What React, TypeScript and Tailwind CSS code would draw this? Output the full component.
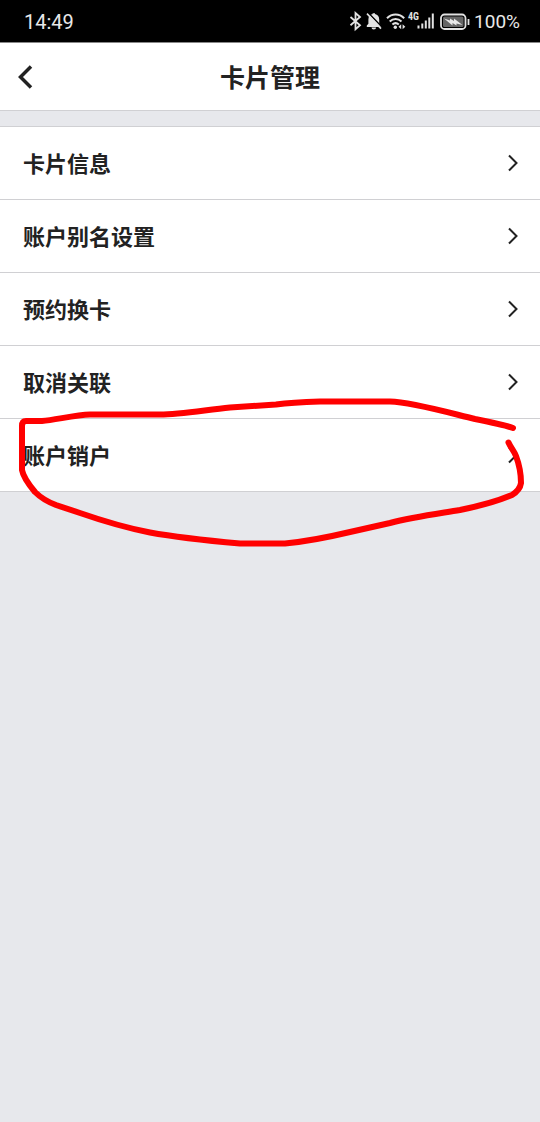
const items = [
  { id: "info", label: "卡片信息" },
  { id: "alias", label: "账户别名设置" },
  { id: "replace", label: "预约换卡" },
  { id: "unlink", label: "取消关联" },
  { id: "close", label: "账户销户", marked: true },
];

function StatusIcons() {
  return (
    <svg className="w-[122px] h-6" viewBox="348 10 122 24" fill="none" stroke="#e2e2e2" aria-hidden="true">
      {/* bluetooth */}
      <path d="M350.5 17l9.5 8.2-4.5 4V13l4.500 4-9.500 8.300" strokeWidth="1.8" />
      {/* muted bell */}
      <path
        d="M366.800 27v-1.500l1.600-1.700v-4.300c0-3 1.700-4.900 4.200-5.400v-.9h2.400v.9c2.500.5 4.200 2.400 4.200 5.400v4.300l1.600 1.700v1.500zM371.500 27.600h4.600a2.300 1.900 0 0 1-4.600 0z"
        fill="#e2e2e2"
        stroke="none"
      />
      <path d="M368.200 12.800l14 14.500" stroke="#000" strokeWidth="1.5" />
      <path d="M367 13.600l14 15" strokeWidth="1.6" />
      {/* wifi */}
      <path d="M387 18.200c4.900-5 12.300-5 17.200 0M389.700 21.400c3.500-3.300 8.300-3.300 11.800 0M392.400 24.500c2-1.700 4.400-1.700 6.400 0" strokeWidth="2" />
      <circle cx="395.3" cy="27.3" r="1.7" fill="#e2e2e2" stroke="none" />
      <path d="M401.200 24.200v5l-2.700-2.500zM402.600 24.200v5l2.700-2.500z" fill="#e2e2e2" stroke="none" />
      <text x="408" y="20" className="text-[10px] font-bold font-['Liberation_Sans_Narrow','Roboto_Condensed',Roboto,sans-serif]" fill="#e2e2e2" stroke="none">
        4G
      </text>
      {/* signal */}
      <path d="M418.500 25.500v3M422.300 23.500v5M425.800 20.500v8M429.300 17.500v11M432.800 13.500v15" strokeWidth="2" />
      {/* battery */}
      <rect x="441" y="14.500" width="24.500" height="14.500" rx="3.500" strokeWidth="1.800" />
      <rect x="443" y="16.500" width="20.500" height="10.500" rx="1.500" fill="#666" stroke="none" />
      <path d="M444 18.500l6 2v-2l4 2.500v-2.500l8.500 6.500-6-1.500v2l-4-2.500v2.500z" fill="#e8e8e8" stroke="none" />
      <path d="M468.500 19v6" strokeWidth="1.800" />
    </svg>
  );
}

function MarkerCircle() {
  return (
    <svg
      className="absolute left-0 -top-6 w-full h-40 pointer-events-none"
      viewBox="0 395 540 160"
      fill="none"
      stroke="#ff0000"
      strokeWidth="6"
      strokeLinecap="round"
      strokeLinejoin="round"
      aria-hidden="true"
    >
      <path d="M513 428C505 425 490 422 475 419C450 413 412 402 390 401.500H320C302 402 290 402.500 276 404.500L230 407.500C205 410 180 414.500 160 414.500H90C75 415 55 420 42 421H26Q22 421 22 426V470C23 476 30 486 35 492C40 497 48 502 56 505L80 513C103 521 127 528 150 532.500C180 538 212 541 240 543.500H285C312 541 329 537 350 532L390 523C413 517 436 514 460 510C480 506 498 501 512 495Q520 490 521 483C521 474 519 464 516 456C514 451 511 448 508.500 442.500" />
    </svg>
  );
}

export default function App() {
  return (
    <div className="min-h-screen bg-[#e7e8ec] text-[#222] font-['Noto_Sans_CJK_SC',sans-serif]">
      <div className="flex items-center justify-between h-[43px] pt-0.5 pl-6 pr-5 bg-black border-b border-[#888] text-[#e8e8e8] font-[Roboto,sans-serif]">
        <span className="text-[20px]">14:49</span>
        <div className="flex items-center gap-1">
          <StatusIcons />
          <span className="text-[19px]">100%</span>
        </div>
      </div>

      <header className="relative flex items-center justify-center h-[68px] bg-white border-b border-[#d0d0d3]">
        <button aria-label="返回" className="absolute left-3 p-1">
          <svg className="w-5 h-6" viewBox="0 0 20 24" fill="none" stroke="currentColor" strokeWidth="3.5">
            <path d="M15 1.500L4.500 12 15 22.500" />
          </svg>
        </button>
        <h1 className="text-[25px] font-bold">卡片管理</h1>
      </header>

      <ul className="mt-[15px] bg-white border-t border-[#d0d0d3]">
        {items.map((item) => (
          <li key={item.id} className="relative border-b border-[#d0d0d3]">
            <a href={`#${item.id}`} className="flex items-center justify-between h-[72px] pb-px pl-[23px] pr-5">
              <span className="text-[22px] font-bold">{item.label}</span>
              <svg className="w-3 h-5" viewBox="0 0 12 20" fill="none" stroke="currentColor" strokeWidth="2" aria-hidden="true">
                <path d="M1 2.500L8.500 10 1 17.500" />
              </svg>
            </a>
            {item.marked && <MarkerCircle />}
          </li>
        ))}
      </ul>
    </div>
  );
}
